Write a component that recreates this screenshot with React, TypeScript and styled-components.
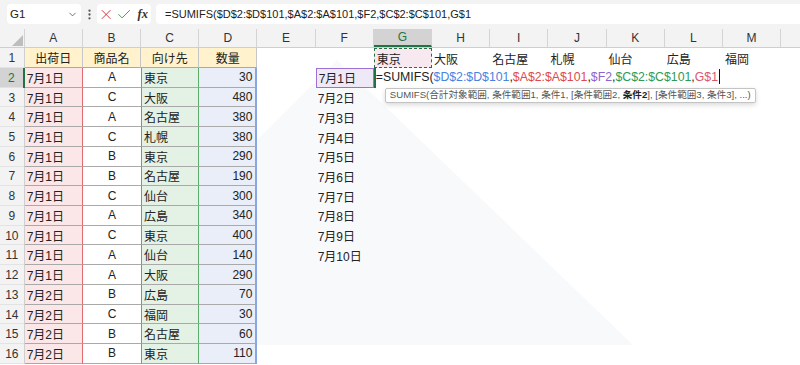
import React from "react";
import styled, { createGlobalStyle, css } from "styled-components";
import { ChevronDown, EllipsisVertical, X, Check } from "lucide-react";

const COLS = "24.7px repeat(14, 58.2px)";
const LETTERS = ["A", "B", "C", "D", "E", "F", "G", "H", "I", "J", "K", "L", "M", ""];

const cities = ["東京", "大阪", "名古屋", "札幌", "仙台", "広島", "福岡"];

const data: [string, string, string, number][] = [
  ["7月1日", "A", "東京", 30],
  ["7月1日", "C", "大阪", 480],
  ["7月1日", "A", "名古屋", 380],
  ["7月1日", "C", "札幌", 380],
  ["7月1日", "B", "東京", 290],
  ["7月1日", "B", "名古屋", 190],
  ["7月1日", "C", "仙台", 300],
  ["7月1日", "A", "広島", 340],
  ["7月1日", "C", "東京", 400],
  ["7月1日", "A", "仙台", 140],
  ["7月1日", "A", "大阪", 290],
  ["7月2日", "B", "広島", 70],
  ["7月2日", "C", "福岡", 30],
  ["7月2日", "B", "名古屋", 60],
  ["7月2日", "B", "東京", 110],
];

type Variant = "plain" | "head" | "a" | "b" | "c" | "d" | "ref" | "dates" | "edit";

function App() {
  return (
    <Page>
      <GlobalStyle />
      <TopBar>
        <NameBox>
          <span>G1</span>
          <ChevronDown size={11} strokeWidth={1.6} color="#444" />
        </NameBox>
        <Dots>
          <EllipsisVertical size={13} strokeWidth={2.2} color="#555" />
        </Dots>
        <FxBox>
          <X size={17} strokeWidth={1.4} color="#d13438" />
          <Check size={17} strokeWidth={1.4} color="#3a9a4e" />
          <Fx>fx</Fx>
        </FxBox>
        <FormulaInput>=SUMIFS($D$2:$D$101,$A$2:$A$101,$F2,$C$2:$C$101,G$1</FormulaInput>
      </TopBar>

      <Sheet>
        <Watermark width="800" height="320" viewBox="0 0 800 320">
          <polygon points="337,31 52,316 633,316" fill="#f8f9fb" />
        </Watermark>

        <Row $head>
          <Corner>
            <svg width="14" height="14" viewBox="0 0 14 14">
              <polygon points="13,2 13,13 2,13" fill="#bdbdbd" />
            </svg>
          </Corner>
          {LETTERS.map((l, i) => (
            <ColHead key={i} $active={l === "G"}>
              {l}
            </ColHead>
          ))}
        </Row>

        <Row>
          <RowHead>1</RowHead>
          <Cell $variant="head" $align="center">出荷日</Cell>
          <Cell $variant="head" $align="center">商品名</Cell>
          <Cell $variant="head" $align="center">向け先</Cell>
          <Cell $variant="head" $align="center">数量</Cell>
          <Cell />
          <Cell />
          <Cell $variant="ref">{cities[0]}</Cell>
          {cities.slice(1).map((c) => (
            <Cell key={c}>{c}</Cell>
          ))}
          <Cell />
        </Row>

        {data.map(([date, item, city, qty], i) => {
          const r = i + 2;
          return (
            <Row key={r}>
              <RowHead $active={r === 2}>{r}</RowHead>
              <Cell $variant="a">{date}</Cell>
              <Cell $variant="b" $align="center">{item}</Cell>
              <Cell $variant="c">{city}</Cell>
              <Cell $variant="d" $align="right">{qty}</Cell>
              <Cell />
              <Cell $variant={r === 2 ? "dates" : "plain"}>
                {r <= 11 ? `7月${r - 1}日` : ""}
              </Cell>
              {r === 2 ? (
                <Cell $variant="edit">
                  <EditText>
                    =SUMIFS(<Ref $c="#4a82e0">$D$2:$D$101</Ref>,
                    <Ref $c="#e0484e">$A$2:$A$101</Ref>,
                    <Ref $c="#8d63cf">$F2</Ref>,
                    <Ref $c="#2f9a53">$C$2:$C$101</Ref>,
                    <Ref $c="#d9576e">G$1</Ref>
                    <Caret />
                  </EditText>
                  <Tip>
                    SUMIFS(合計対象範囲, 条件範囲1, 条件1, [条件範囲2, <b>条件2</b>], [条件範囲3, 条件3], ...)
                  </Tip>
                </Cell>
              ) : (
                <Cell />
              )}
              {Array.from({ length: 7 }).map((_, k) => (
                <Cell key={k} />
              ))}
            </Row>
          );
        })}
      </Sheet>
    </Page>
  );
}

export default App;

const GlobalStyle = createGlobalStyle`
  html, body {
    margin: 0;
    padding: 0;
    background: #fff;
    overflow: hidden;
  }
  body {
    font-family: "Liberation Sans", "Noto Sans CJK JP", sans-serif;
    color: #222;
  }
`;

const Page = styled.div`
  width: 800px;
  height: 365px;
  overflow: hidden;
  background: #fff;
`;

const TopBar = styled.div`
  display: flex;
  align-items: center;
  height: 29px;
  padding: 0 0 1px 7px;
  box-sizing: border-box;
  background: #f3f3f3;
`;

const NameBox = styled.div`
  display: flex;
  align-items: center;
  justify-content: space-between;
  width: 74px;
  height: 20px;
  box-sizing: border-box;
  padding: 0 3px;
  background: #fff;
  border-radius: 4px;
  font-size: 11.5px;
  color: #222;
`;

const Dots = styled.div`
  width: 16px;
  display: flex;
  justify-content: center;
`;

const FxBox = styled.div`
  display: flex;
  align-items: center;
  gap: 2px;
  width: 54px;
  height: 20px;
  box-sizing: border-box;
  padding: 0 3px 0 1px;
  margin-right: 5px;
  background: #fff;
  border-radius: 4px;
`;

const Fx = styled.span`
  font-family: "Liberation Serif", serif;
  font-style: italic;
  font-weight: bold;
  font-size: 12.5px;
  color: #333;
  margin-left: 3px;
`;

const FormulaInput = styled.div`
  flex: 1;
  height: 20px;
  line-height: 20px;
  padding-left: 9px;
  background: #fff;
  border-radius: 4px 0 0 4px;
  font-size: 11px;
  color: #222;
  white-space: nowrap;
`;

const Sheet = styled.div`
  position: relative;
`;

const Watermark = styled.svg`
  position: absolute;
  left: 0;
  top: 0;
  z-index: 0;
  pointer-events: none;
`;

const Row = styled.div<{ $head?: boolean }>`
  position: relative;
  z-index: 1;
  display: grid;
  grid-template-columns: ${COLS};
  height: ${({ $head }) => ($head ? "19.3px" : "19.73px")};
  ${({ $head }) =>
    $head &&
    css`
      background: #f3f3f3;
      border-bottom: 1px solid #cfcfcf;
      box-sizing: border-box;
    `}
`;

const Corner = styled.div`
  display: flex;
  align-items: flex-end;
  justify-content: flex-end;
  border-right: 1px solid #d4d4d4;
`;

const ColHead = styled.div<{ $active?: boolean }>`
  display: flex;
  align-items: center;
  justify-content: center;
  font-size: 12px;
  color: #333;
  border-right: 1px solid #d4d4d4;
  ${({ $active }) =>
    $active &&
    css`
      background: #d3d3d3;
      color: #217346;
      border-bottom: 2px solid #217346;
    `}
`;

const RowHead = styled.div<{ $active?: boolean }>`
  display: flex;
  align-items: center;
  justify-content: center;
  font-size: 12px;
  color: #333;
  background: #f3f3f3;
  border-right: 1px solid #cfcfcf;
  box-shadow: inset 0 -1px 0 #e3e3e3;
  ${({ $active }) =>
    $active &&
    css`
      background: #d3d3d3;
      color: #217346;
      border-right: 2px solid #217346;
    `}
`;

const variants: Record<Variant, ReturnType<typeof css>> = {
  plain: css``,
  head: css`
    background: #fff2cc;
    border-right: 1px solid #c6c6c6;
    border-bottom: 1px solid #a9a9a9;
  `,
  a: css`
    background: #fbe6e8;
    border-right: 1px solid #e36a70;
    border-bottom: 1px solid #a9a9a9;
  `,
  b: css`
    background: #fff;
    border-bottom: 1px solid #a9a9a9;
  `,
  c: css`
    background: #e4f1e5;
    border-left: 1px solid #5cac6c;
    border-right: 1px solid #5cac6c;
    border-bottom: 1px solid #a9a9a9;
  `,
  d: css`
    background: #e9eef9;
    border-right: 2px solid #86a7e3;
    border-bottom: 1px solid #a9a9a9;
  `,
  ref: css`
    background: #f8e8ef;
    border: 1px dashed #2a6e46;
  `,
  dates: css`
    background: #efe9f7;
    border: 1px solid #9b72d4;
  `,
  edit: css`
    position: relative;
    overflow: visible;
    border: 2px solid #217346;
    border-right: none;
    padding: 0;
    z-index: 3;
  `,
};

const Cell = styled.div<{ $variant?: Variant; $align?: "left" | "center" | "right" }>`
  box-sizing: border-box;
  display: flex;
  align-items: center;
  justify-content: ${({ $align }) =>
    $align === "center" ? "center" : $align === "right" ? "flex-end" : "flex-start"};
  padding: ${({ $align }) => ($align === "right" ? "0 3px 0 2px" : "0 2px")};
  font-size: 12px;
  color: #222;
  white-space: nowrap;
  overflow: hidden;
  ${({ $variant = "plain" }) => variants[$variant]}
`;

const EditText = styled.div`
  position: absolute;
  left: 0;
  top: -2px;
  height: 19.73px;
  line-height: 19.73px;
  padding-right: 2px;
  background: #fff;
  font-size: 12.3px;
  color: #222;
  white-space: nowrap;
`;

const Ref = styled.span<{ $c: string }>`
  color: ${({ $c }) => $c};
`;

const Caret = styled.span`
  display: inline-block;
  width: 1px;
  height: 15px;
  margin-left: 1px;
  vertical-align: -3px;
  background: #111;
`;

const Tip = styled.div`
  position: absolute;
  left: 9px;
  top: 18px;
  height: 13px;
  line-height: 12px;
  padding: 0 4px;
  background: #fff;
  border: 1px solid #c4c4c4;
  border-radius: 2px;
  box-shadow: 0 2px 5px rgba(0, 0, 0, 0.15);
  font-size: 9.6px;
  color: #555;
  white-space: nowrap;

  b {
    color: #222;
  }
`;
